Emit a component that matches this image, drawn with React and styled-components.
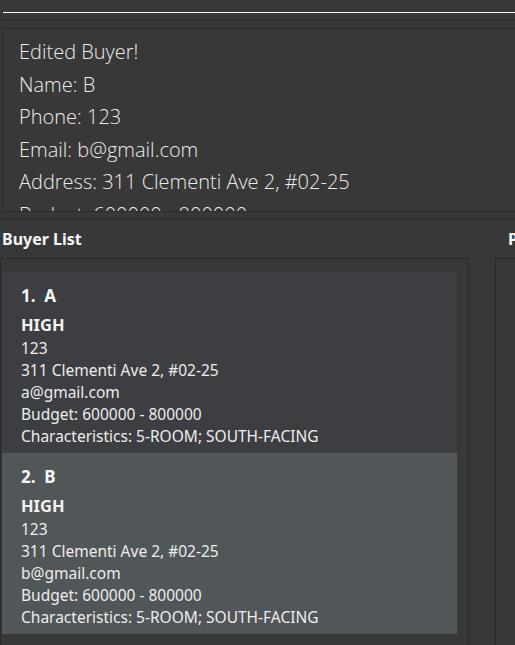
import React from 'react';
import styled, { createGlobalStyle } from 'styled-components';

const GlobalStyle = createGlobalStyle`
  body {
    margin: 0;
    background: #383838;
    overflow: hidden;
  }
`;

const buyers = [
  {
    id: 1,
    name: 'A',
    priority: 'HIGH',
    phone: '123',
    address: '311 Clementi Ave 2, #02-25',
    email: 'a@gmail.com',
    budget: '600000 - 800000',
    traits: '5-ROOM; SOUTH-FACING',
  },
  {
    id: 2,
    name: 'B',
    priority: 'HIGH',
    phone: '123',
    address: '311 Clementi Ave 2, #02-25',
    email: 'b@gmail.com',
    budget: '600000 - 800000',
    traits: '5-ROOM; SOUTH-FACING',
  },
];

const App = () => {
  return (
    <Window>
      <GlobalStyle />

      {/* Command box */}
      <CommandBar>
        <CommandInput />
      </CommandBar>

      {/* Result display */}
      <ResultSection>
        <ResultPane>
          <ResultLine>Edited Buyer!</ResultLine>
          <ResultLine>Name: B</ResultLine>
          <ResultLine>Phone: 123</ResultLine>
          <ResultLine>Email: b@gmail.com</ResultLine>
          <ResultLine>Address: 311 Clementi Ave 2, #02-25</ResultLine>
          <ResultLine>Budget: 600000 - 800000</ResultLine>
        </ResultPane>
      </ResultSection>

      {/* Lists */}
      <Lists>
        <ListColumn>
          <ListTitle>Buyer List</ListTitle>
          <ListBox>
            {buyers.map((b) => (
              <Card key={b.id} selected={b.id === 2}>
                <CardTitle>
                  {b.id}.&nbsp;&nbsp;{b.name}
                </CardTitle>
                <Priority>{b.priority}</Priority>
                <CardLine>{b.phone}</CardLine>
                <CardLine>{b.address}</CardLine>
                <CardLine>{b.email}</CardLine>
                <CardLine>Budget: {b.budget}</CardLine>
                <CardLine>Characteristics: {b.traits}</CardLine>
              </Card>
            ))}
          </ListBox>
        </ListColumn>
        <Gutter />
        <ListColumn>
          <ListTitle indent={13}>Property List</ListTitle>
          <ListBox />
        </ListColumn>
      </Lists>
    </Window>
  );
};

// Styled-components
const Window = styled.div`
  width: 515px;
  height: 645px;
  overflow: hidden;
  background: #383838;
  font-family: 'Noto Sans', 'Open Sans', sans-serif;
  color: #ffffff;
`;

const CommandBar = styled.div`
  height: 20px;
  padding-left: 3px;
  border-bottom: 1px solid #2e2e2e;
`;

const CommandInput = styled.div`
  height: 12px;
  border-bottom: 1px solid #ffffff;
`;

const ResultSection = styled.div`
  padding: 7px 0 6px 2px;
  border-bottom: 1px solid #2c2c2c;
`;

const ResultPane = styled.div`
  height: 184px;
  box-sizing: border-box;
  border: 1px solid #2a2a2a;
  border-right: none;
  padding: 7px 0 0 16px;
  overflow: hidden;
`;

const ResultLine = styled.div`
  font-family: 'Open Sans', sans-serif;
  font-weight: 300;
  font-size: 20px;
  line-height: 32.5px;
  color: #ececec;
  white-space: nowrap;
`;

const Lists = styled.div`
  display: flex;
`;

const ListColumn = styled.div`
  width: 469px;
  flex-shrink: 0;
`;

const Gutter = styled.div`
  width: 26px;
  flex-shrink: 0;
`;

const ListTitle = styled.div`
  height: 39px;
  padding-left: ${(p) => p.indent || 2}px;
  font-weight: 700;
  font-size: 16px;
  line-height: 41px;
  white-space: nowrap;
  color: #f4f4f4;
`;

const ListBox = styled.div`
  height: 400px;
  box-sizing: border-box;
  border: 1px solid #2a2a2a;
  padding: 13px 11px 0 1px;
`;

const Card = styled.div`
  height: 181px;
  box-sizing: border-box;
  padding: 7px 0 0 19px;
  background: ${(p) => (p.selected ? '#515658' : '#3c3e41')};
`;

const CardTitle = styled.div`
  font-weight: 700;
  font-size: 17px;
  line-height: 34px;
  color: #f6f6f6;
`;

const Priority = styled.div`
  font-weight: 700;
  font-size: 16.5px;
  line-height: 24px;
  color: #f2f2f2;
`;

const CardLine = styled.div`
  font-size: 15.5px;
  line-height: 22px;
  color: #ededed;
  white-space: nowrap;
`;

export default App;
